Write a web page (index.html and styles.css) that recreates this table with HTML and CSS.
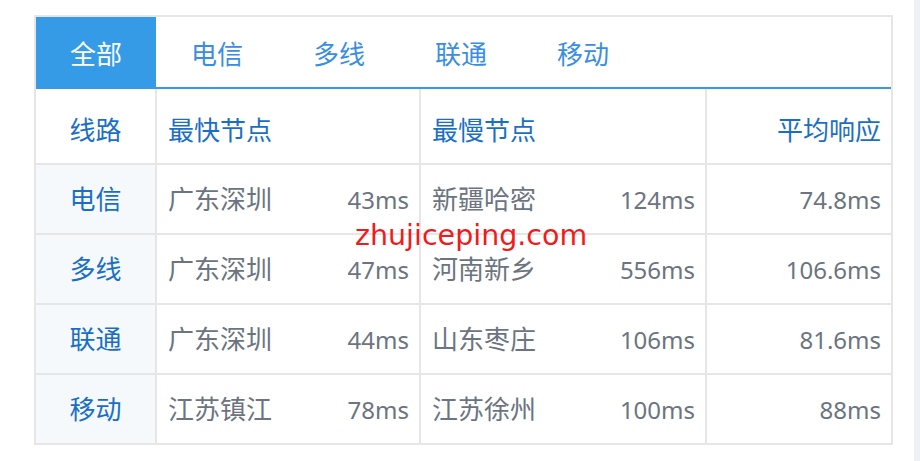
FILE: index.html
```html
<!DOCTYPE html>
<html lang="zh-CN">
<head>
  <meta charset="UTF-8">
  <meta name="viewport" content="width=device-width, initial-scale=1.0">
  <title>节点响应</title>
  <link rel="stylesheet" href="styles.css">
</head>
<body>

  <div class="page">
    <div class="ping-box">
      <!-- 线路切换 -->
      <div class="tabs">
        <span class="tab active">全部</span>
        <span class="tab">电信</span>
        <span class="tab">多线</span>
        <span class="tab">联通</span>
        <span class="tab">移动</span>
      </div>

      <table class="ping-table">
        <colgroup>
          <col class="c-line">
          <col class="c-fast">
          <col class="c-slow">
          <col class="c-avg">
        </colgroup>
        <tr class="head">
          <th><div class="cell line">线路</div></th>
          <th><div class="cell">最快节点</div></th>
          <th><div class="cell">最慢节点</div></th>
          <th><div class="cell avg">平均响应</div></th>
        </tr>
        <tr>
          <td class="line-td"><div class="cell line">电信</div></td>
          <td><div class="cell"><span>广东深圳</span><span class="ms">43ms</span></div></td>
          <td><div class="cell"><span>新疆哈密</span><span class="ms">124ms</span></div></td>
          <td><div class="cell avg"><span class="ms">74.8ms</span></div></td>
        </tr>
        <tr>
          <td class="line-td"><div class="cell line">多线</div></td>
          <td><div class="cell"><span>广东深圳</span><span class="ms">47ms</span></div></td>
          <td><div class="cell"><span>河南新乡</span><span class="ms">556ms</span></div></td>
          <td><div class="cell avg"><span class="ms">106.6ms</span></div></td>
        </tr>
        <tr>
          <td class="line-td"><div class="cell line">联通</div></td>
          <td><div class="cell"><span>广东深圳</span><span class="ms">44ms</span></div></td>
          <td><div class="cell"><span>山东枣庄</span><span class="ms">106ms</span></div></td>
          <td><div class="cell avg"><span class="ms">81.6ms</span></div></td>
        </tr>
        <tr>
          <td class="line-td"><div class="cell line">移动</div></td>
          <td><div class="cell"><span>江苏镇江</span><span class="ms">78ms</span></div></td>
          <td><div class="cell"><span>江苏徐州</span><span class="ms">100ms</span></div></td>
          <td><div class="cell avg"><span class="ms">88ms</span></div></td>
        </tr>
      </table>

      <div class="watermark">zhujiceping.com</div>
    </div>
  </div>

  <div class="side-strip"></div>

</body>
</html>
```

FILE: styles.css
```css
body {
  margin: 0;
  background: #fff;
  font-family: "Noto Sans", "Noto Sans CJK SC", sans-serif;
  font-size: 26px;
}
.page {
  padding: 15px 0 0 34px;
}
.ping-box {
  position: relative;
  width: 859px;
  box-sizing: border-box;
  border: 2px solid #e6e6e6;
}
.tabs {
  display: flex;
  height: 70px;
  border-bottom: 2px solid #359be6;
}
.tab {
  width: 122px;
  display: flex;
  align-items: center;
  justify-content: center;
  padding-top: 2px;
  color: #3a8ee2;
}
.tab.active {
  width: 120px;
  background: #359be6;
  color: #fff;
}
.ping-table {
  width: 855px;
  table-layout: fixed;
  border-collapse: separate;
  border-spacing: 0;
}
.c-line { width: 121px; }
.c-fast { width: 264px; }
.c-slow { width: 286px; }
.c-avg { width: 184px; }

.ping-table th,
.ping-table td {
  padding: 0;
  border-right: 2px solid #e6e6e6;
  border-bottom: 2px solid #e6e6e6;
  color: #6b7480;
  font-weight: normal;
  text-align: left;
}
.ping-table tr > :last-child { border-right: none; }
.ping-table tr:last-child > * { border-bottom: none; }

.cell {
  box-sizing: border-box;
  display: flex;
  align-items: center;
  justify-content: space-between;
  height: 68px;
  padding: 0 10px 0 11px;
  line-height: 1;
}
.head .cell {
  height: 74px;
  padding-top: 8px;
  color: #1a6fc4;
}
.ms {
  font-size: 24px;
  position: relative;
  top: 1px;
}
.cell.line {
  justify-content: center;
  padding-left: 0;
  padding-right: 0;
  color: #1a6fc4;
}
.line-td {
  background: #f5f9fc;
}
.cell.avg {
  justify-content: flex-end;
}

.watermark {
  position: absolute;
  left: 319px;
  top: 199px;
  font-family: "DejaVu Sans", sans-serif;
  font-size: 28.5px;
  line-height: 40px;
  color: #f01b1b;
}
.side-strip {
  position: fixed;
  top: 0;
  right: 0;
  width: 6px;
  height: 100%;
  background: #eef2f7;
}
```
